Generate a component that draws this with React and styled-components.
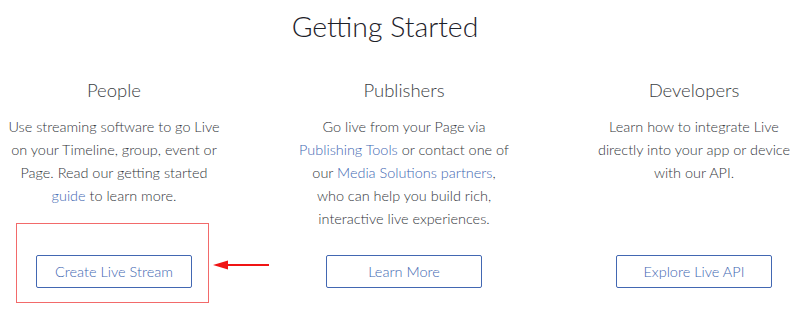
import React from "react"
import styled, { createGlobalStyle } from "styled-components"

const GlobalStyle = createGlobalStyle`
  html, body {
    margin: 0;
    padding: 0;
    background: #ffffff;
  }
  body {
    font-family: Lato, "Open Sans", sans-serif;
    -webkit-font-smoothing: antialiased;
  }
`

const columns = [
  {
    title: "People",
    body: [
      "Use streaming software to go Live",
      "on your Timeline, group, event or",
      "Page. Read our getting started",
      [{ link: "guide" }, " to learn more."],
    ],
    button: "Create Live Stream",
    highlight: true,
  },
  {
    title: "Publishers",
    body: [
      "Go live from your Page via",
      [{ link: "Publishing Tools" }, " or contact one of"],
      ["our ", { link: "Media Solutions partners" }, ","],
      "who can help you build rich,",
      "interactive live experiences.",
    ],
    button: "Learn More",
  },
  {
    title: "Developers",
    body: [
      "Learn how to integrate Live",
      "directly into your app or device",
      "with our API.",
    ],
    button: "Explore Live API",
  },
]

function renderLine(line, i) {
  const parts = Array.isArray(line) ? line : [line]
  return (
    <Line key={i}>
      {parts.map((p, j) =>
        typeof p === "string" ? (
          <React.Fragment key={j}>{p}</React.Fragment>
        ) : (
          <Link key={j} href="#">
            {p.link}
          </Link>
        )
      )}
    </Line>
  )
}

function App() {
  return (
    <>
      <GlobalStyle />
      <Page>
        <Title>Getting Started</Title>
        <Columns>
          {columns.map((col) => (
            <Column key={col.title}>
              <Heading>{col.title}</Heading>
              <Body>{col.body.map(renderLine)}</Body>
              <ButtonWrap>
                {col.highlight && (
                  <>
                    <Highlight />
                    <Arrow width="58" height="12" viewBox="0 0 58 12">
                      <line x1="12" y1="6" x2="56" y2="6" stroke="#f01414" strokeWidth="2" />
                      <polygon points="0,6 15,1.5 15,10.5" fill="#f01414" />
                    </Arrow>
                  </>
                )}
                <Button>{col.button}</Button>
              </ButtonWrap>
            </Column>
          ))}
        </Columns>
      </Page>
    </>
  )
}

const Page = styled.div`
  width: 800px;
  height: 314px;
  overflow: hidden;
  background: #ffffff;
`
const Title = styled.h1`
  margin: 0;
  padding: 6px 30px 0 0;
  text-align: center;
  font-weight: 300;
  font-size: 28.4px;
  line-height: 40px;
  color: #1d2129;
`
const Columns = styled.div`
  display: grid;
  grid-template-columns: repeat(3, 290px);
  margin-left: -31px;
  margin-top: 29px;
`
const Column = styled.div`
  display: flex;
  flex-direction: column;
  align-items: center;
  text-align: center;
`
const Heading = styled.h2`
  margin: 0;
  font-weight: 300;
  font-size: 18.5px;
  line-height: 30px;
  color: #3b3e43;
`
const Body = styled.div`
  margin-top: 10px;
  font-size: 14.45px;
  font-weight: 300;
  line-height: 23px;
  color: #33363b;
  height: 115px;
`
const Line = styled.div`
  white-space: nowrap;
`
const Link = styled.a`
  color: #4267b2;
  text-decoration: none;
`
const ButtonWrap = styled.div`
  position: relative;
  margin-top: 25px;
`
const Button = styled.button`
  display: block;
  width: 156px;
  height: 33px;
  padding: 0;
  border: 1px solid #4267b2;
  border-radius: 2px;
  background: #ffffff;
  color: #4267b2;
  font-family: Lato, "Open Sans", sans-serif;
  font-weight: 300;
  font-size: 14.5px;
  cursor: pointer;
`
const Highlight = styled.div`
  position: absolute;
  top: -32px;
  left: -20px;
  right: -17px;
  bottom: -15px;
  border: 1px solid #f26a6a;
  pointer-events: none;
`
const Arrow = styled.svg`
  position: absolute;
  left: calc(100% + 21px);
  top: 4px;
`

export default App
